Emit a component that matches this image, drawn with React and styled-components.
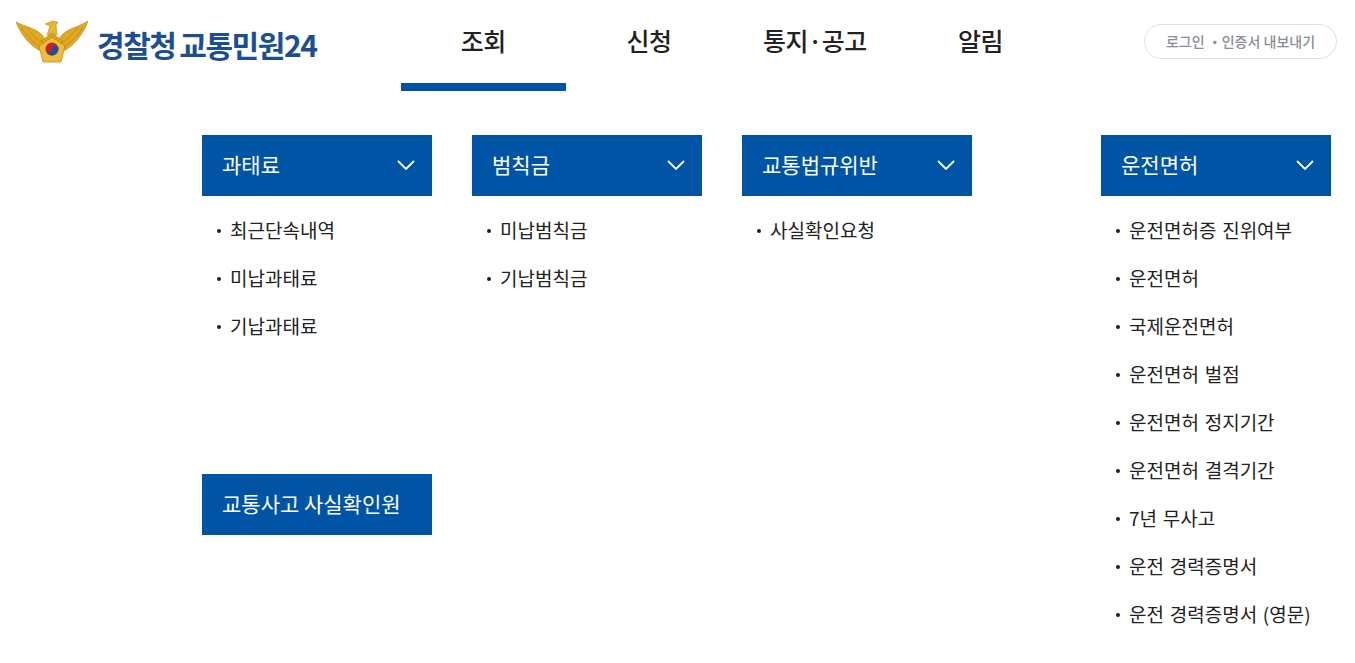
import styled, { createGlobalStyle } from "styled-components";

const menus = [
  { title: "과태료", items: ["최근단속내역", "미납과태료", "기납과태료"] },
  { title: "범칙금", items: ["미납범칙금", "기납범칙금"] },
  { title: "교통법규위반", items: ["사실확인요청"] },
  {
    title: "운전면허",
    items: [
      "운전면허증 진위여부",
      "운전면허",
      "국제운전면허",
      "운전면허 벌점",
      "운전면허 정지기간",
      "운전면허 결격기간",
      "7년 무사고",
      "운전 경력증명서",
      "운전 경력증명서 (영문)",
    ],
  },
];

const tabs = ["조회", "신청", "통지·공고", "알림"];

function Emblem() {
  return (
    <svg width="72" height="43" viewBox="0 0 72 43">
      {/* wings */}
      <path d="M0 2 C7 6 15 7 21 11 C26 14 29 18 30 22 L25 31 C15 27 5 15 0 2Z" fill="#e3a823" stroke="#b9820f" strokeWidth="0.6" />
      <path d="M72 1 C65 6 57 7 51 11 C46 14 43 18 42 22 L47 31 C57 27 67 15 72 1Z" fill="#e3a823" stroke="#b9820f" strokeWidth="0.6" />
      <path d="M5 7 C10 15 17 23 25 27 M11 8 C15 14 21 20 27 23 M67 7 C62 15 55 23 47 27 M61 8 C57 14 51 20 45 23" stroke="#b9820f" strokeWidth="0.7" fill="none" />
      {/* head and neck */}
      <path d="M29 4 L36 1 L42 2 L40 5 L41 15 L31 15 L34 6Z" fill="#e9b52e" stroke="#b9820f" strokeWidth="0.5" />
      {/* body */}
      <path d="M25 21 L36 13 L47 21 L43 24 L29 24Z" fill="#dca020" stroke="#b9820f" strokeWidth="0.5" />
      {/* shield */}
      <path d="M36 17 L49 26 L45 42 L27 42 L23 26Z" fill="#efbd3c" stroke="#b9820f" strokeWidth="0.7" />
      <circle cx="36" cy="29" r="6.5" fill="#c8232c" />
      <path d="M29.5 29 A3.25 3.25 0 0 0 36 29 A3.25 3.25 0 0 1 42.5 29 A6.5 6.5 0 0 1 29.5 29Z" fill="#1d4f9c" />
    </svg>
  );
}

function Chevron() {
  return (
    <ChevronIcon width="18" height="10" viewBox="0 0 18 10" fill="none">
      <path d="M1 1 L9 9 L17 1" stroke="#fff" strokeWidth="1.8" />
    </ChevronIcon>
  );
}

export default function App() {
  return (
    <Page>
      <GlobalStyle />
      <Header>
        <Logo>
          <Emblem />
          <LogoText>경찰청 교통민원24</LogoText>
        </Logo>
        <Nav>
          {tabs.map((tab, i) => (
            <Tab key={tab} active={i === 0}>
              {tab}
            </Tab>
          ))}
        </Nav>
        <LoginPill>로그인 ・인증서 내보내기</LoginPill>
      </Header>
      <Columns>
        {menus.map((menu, i) => (
          <Column key={menu.title} last={i === 3}>
            <MenuHead>
              {menu.title}
              <Chevron />
            </MenuHead>
            <MenuList>
              {menu.items.map((item) => (
                <MenuItem key={item}>{item}</MenuItem>
              ))}
            </MenuList>
            {i === 0 && <SoloHead>교통사고 사실확인원</SoloHead>}
          </Column>
        ))}
      </Columns>
    </Page>
  );
}

const GlobalStyle = createGlobalStyle`
  body {
    margin: 0;
    background: #fff;
    font-family: "Noto Sans CJK KR", "Noto Sans", sans-serif;
  }
`;

const Page = styled.div`
  width: 1355px;
  height: 663px;
  overflow: hidden;
`;

const Header = styled.header`
  display: flex;
  height: 91px;
`;

const Logo = styled.div`
  display: flex;
  width: 401px;
  padding: 20px 0 0 16px;
  box-sizing: border-box;
`;

const LogoText = styled.div`
  margin: 4px 0 0 9px;
  font-size: 30px;
  line-height: 40px;
  font-weight: 700;
  letter-spacing: -1.45px;
  word-spacing: -1.5px;
  color: #1c4f92;
  white-space: nowrap;
`;

const Nav = styled.nav`
  display: flex;
  gap: 1px;
  width: 662px;
`;

const Tab = styled.div`
  width: 165px;
  height: 91px;
  box-sizing: border-box;
  padding-top: 21px;
  text-align: center;
  font-size: 25px;
  line-height: 38px;
  font-weight: 500;
  letter-spacing: -0.5px;
  color: #222;
  white-space: nowrap;
  border-bottom: 8px solid ${(props) => (props.active ? "#0054a6" : "transparent")};
`;

const LoginPill = styled.div`
  align-self: flex-start;
  margin: 24px 0 0 81px;
  width: 193px;
  height: 35px;
  box-sizing: border-box;
  border: 1px solid #dde0e8;
  border-radius: 18px;
  text-align: center;
  font-size: 14px;
  line-height: 33px;
  font-weight: 500;
  letter-spacing: 0;
  color: #8a8d96;
  white-space: nowrap;
`;

const Columns = styled.main`
  display: flex;
  gap: 40px;
  padding: 44px 0 0 202px;
`;

const Column = styled.section`
  width: 230px;
  margin-left: ${(props) => (props.last ? "89px" : "0")};
`;

const MenuHead = styled.div`
  display: flex;
  align-items: center;
  justify-content: space-between;
  height: 61px;
  padding: 0 17px 4px 20px;
  box-sizing: border-box;
  background: #0054a6;
  color: #fff;
  font-size: 21px;
  font-weight: 400;
`;

const ChevronIcon = styled.svg`
  display: block;
  margin-top: 2px;
`;

const SoloHead = styled(MenuHead)`
  margin-top: 124px;
`;

const MenuList = styled.ul`
  list-style: none;
  margin: 10px 0 0;
  padding: 0;
`;

const MenuItem = styled.li`
  position: relative;
  height: 48px;
  padding-left: 28px;
  font-size: 19px;
  line-height: 48px;
  word-spacing: 1.5px;
  color: #222;
  white-space: nowrap;

  &::before {
    content: "";
    position: absolute;
    left: 15px;
    top: 23px;
    width: 4px;
    height: 4px;
    border-radius: 50%;
    background: #222;
  }
`;
